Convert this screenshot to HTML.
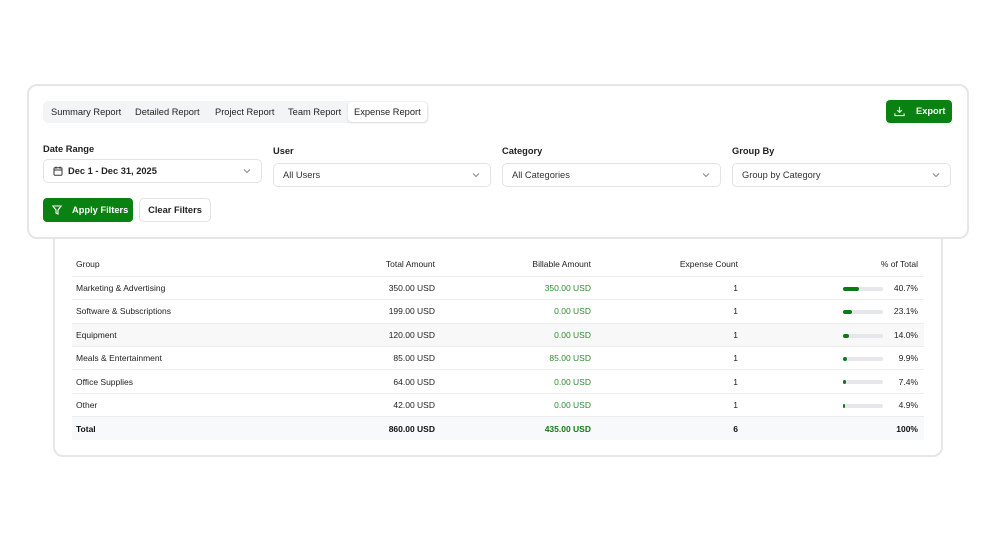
<!DOCTYPE html>
<html><head><meta charset="utf-8"><style>
*{box-sizing:border-box;margin:0;padding:0}
body{width:996px;height:539px;background:#fff;font-family:"Liberation Sans",sans-serif;color:#111;position:relative;overflow:hidden;font-size:9px}
.abs{position:absolute}
.card{border:2px solid #e6e6e6;border-radius:10px;background:#fff}
.tabs{left:43px;top:101px;width:386px;height:22px;background:#f3f4f5;border-radius:5px}
.tab{position:absolute;top:0;height:22px;line-height:22px;font-size:9.3px;color:#222}
.tab.act{background:#fff;border-radius:4px;box-shadow:0 1px 2px rgba(0,0,0,.12);padding:0 6px;top:1px;height:20px;line-height:20px}
.btn{background:#0a8212;color:#fff;border-radius:4px;font-weight:bold;font-size:9.3px}
.lbl{font-size:9.3px;font-weight:bold;color:#222}
.inp{border:1px solid #e3e3e3;border-radius:5px;height:24px;line-height:22px;padding-left:9px;font-size:9.3px;color:#333;background:#fff}
.chev{position:absolute;right:10px;top:8px}
table{position:absolute;left:72px;top:253px;width:852px;border-collapse:collapse;font-size:8.5px}
td{height:23.4px;border-bottom:1px solid #ececec;padding:0 4px;color:#222}
td.r{text-align:right;padding-right:0}
td:last-child{padding-right:6px;position:relative}
tr.alt td{background:#f8f8f8}
tr.tot td{background:#f7f9fb;font-weight:bold;border-bottom:none;color:#111}
.g{color:#2f8a2f}
.bar{position:absolute;left:105px;top:10px;width:40px;height:4px;background:#e6e7ea;border-radius:2px}
.bar i{position:absolute;left:0;top:0;height:4px;background:#0a7a14;border-radius:2px}
</style></head><body>
<div class="abs card" style="left:53px;top:228px;width:890px;height:229px"></div>
<div class="abs card" style="left:27px;top:84px;width:942px;height:155px"></div>

<div class="abs tabs">
<span class="tab" style="left:8px">Summary Report</span>
<span class="tab" style="left:92px">Detailed Report</span>
<span class="tab" style="left:172px">Project Report</span>
<span class="tab" style="left:245px">Team Report</span>
<span class="tab act" style="left:305px">Expense Report</span>
</div>

<div class="abs btn" style="left:886px;top:100px;width:66px;height:23px">
<svg class="abs" style="left:8px;top:6px" width="11" height="11" viewBox="0 0 12 12" fill="none" stroke="#fff" stroke-width="1.2"><path d="M6 1v6M3.5 4.5L6 7l2.5-2.5M1 8v2.5h10V8"/></svg>
<span class="abs" style="left:30px;top:6px">Export</span></div>

<div class="abs lbl" style="left:43px;top:144px">Date Range</div>
<div class="abs lbl" style="left:273px;top:146px">User</div>
<div class="abs lbl" style="left:502px;top:146px">Category</div>
<div class="abs lbl" style="left:732px;top:146px">Group By</div>

<div class="abs inp" style="left:43px;top:159px;width:219px;padding-left:24px;font-weight:bold;color:#222">
<svg class="abs" style="left:9px;top:6px" width="10" height="10" viewBox="0 0 10 10" fill="none" stroke="#333" stroke-width="1"><rect x="1" y="1.8" width="8" height="7.4" rx="1"/><path d="M1 4h8M3 .5v2.3M7 .5v2.3"/></svg>
Dec 1 - Dec 31, 2025<svg class="chev" width="8" height="6" viewBox="0 0 8 6" fill="none" stroke="#888"><path d="M1 1.5l3 3 3-3"/></svg></div>
<div class="abs inp" style="left:273px;top:163px;width:218px">All Users<svg class="chev" width="8" height="6" viewBox="0 0 8 6" fill="none" stroke="#888"><path d="M1 1.5l3 3 3-3"/></svg></div>
<div class="abs inp" style="left:502px;top:163px;width:219px">All Categories<svg class="chev" width="8" height="6" viewBox="0 0 8 6" fill="none" stroke="#888"><path d="M1 1.5l3 3 3-3"/></svg></div>
<div class="abs inp" style="left:732px;top:163px;width:219px">Group by Category<svg class="chev" width="8" height="6" viewBox="0 0 8 6" fill="none" stroke="#888"><path d="M1 1.5l3 3 3-3"/></svg></div>

<div class="abs btn" style="left:43px;top:198px;width:90px;height:24px">
<svg class="abs" style="left:9px;top:7px" width="10" height="10" viewBox="0 0 10 10" fill="none" stroke="#fff" stroke-width="1.1"><path d="M.8 1h8.4L6 5v4L4 8V5z"/></svg>
<span class="abs" style="left:29px;top:7px">Apply Filters</span></div>
<div class="abs" style="left:139px;top:198px;width:72px;height:24px;border:1px solid #e3e3e3;border-radius:5px;text-align:center;line-height:22px;font-weight:bold;font-size:9.3px;color:#222">Clear Filters</div>

<table>
<tr class="h"><td>Group</td><td class="r">Total Amount</td><td class="r">Billable Amount</td><td class="r">Expense Count</td><td class="r">% of Total</td></tr>
<tr><td>Marketing &amp; Advertising</td><td class="r">350.00 USD</td><td class="r g">350.00 USD</td><td class="r">1</td><td class="r"><span class="bar"><i style="width:16px"></i></span>40.7%</td></tr>
<tr><td>Software &amp; Subscriptions</td><td class="r">199.00 USD</td><td class="r g">0.00 USD</td><td class="r">1</td><td class="r"><span class="bar"><i style="width:9px"></i></span>23.1%</td></tr>
<tr class="alt"><td>Equipment</td><td class="r">120.00 USD</td><td class="r g">0.00 USD</td><td class="r">1</td><td class="r"><span class="bar"><i style="width:6px"></i></span>14.0%</td></tr>
<tr><td>Meals &amp; Entertainment</td><td class="r">85.00 USD</td><td class="r g">85.00 USD</td><td class="r">1</td><td class="r"><span class="bar"><i style="width:4px"></i></span>9.9%</td></tr>
<tr><td>Office Supplies</td><td class="r">64.00 USD</td><td class="r g">0.00 USD</td><td class="r">1</td><td class="r"><span class="bar"><i style="width:3px"></i></span>7.4%</td></tr>
<tr><td>Other</td><td class="r">42.00 USD</td><td class="r g">0.00 USD</td><td class="r">1</td><td class="r"><span class="bar"><i style="width:2px"></i></span>4.9%</td></tr>
<tr class="tot"><td>Total</td><td class="r">860.00 USD</td><td class="r" style="color:#167a16">435.00 USD</td><td class="r">6</td><td class="r">100%</td></tr>
</table>
<style>table td:nth-child(1){width:220px}table td:nth-child(2){width:143px}table td:nth-child(3){width:156px}table td:nth-child(4){width:147px}</style>
</body></html>
